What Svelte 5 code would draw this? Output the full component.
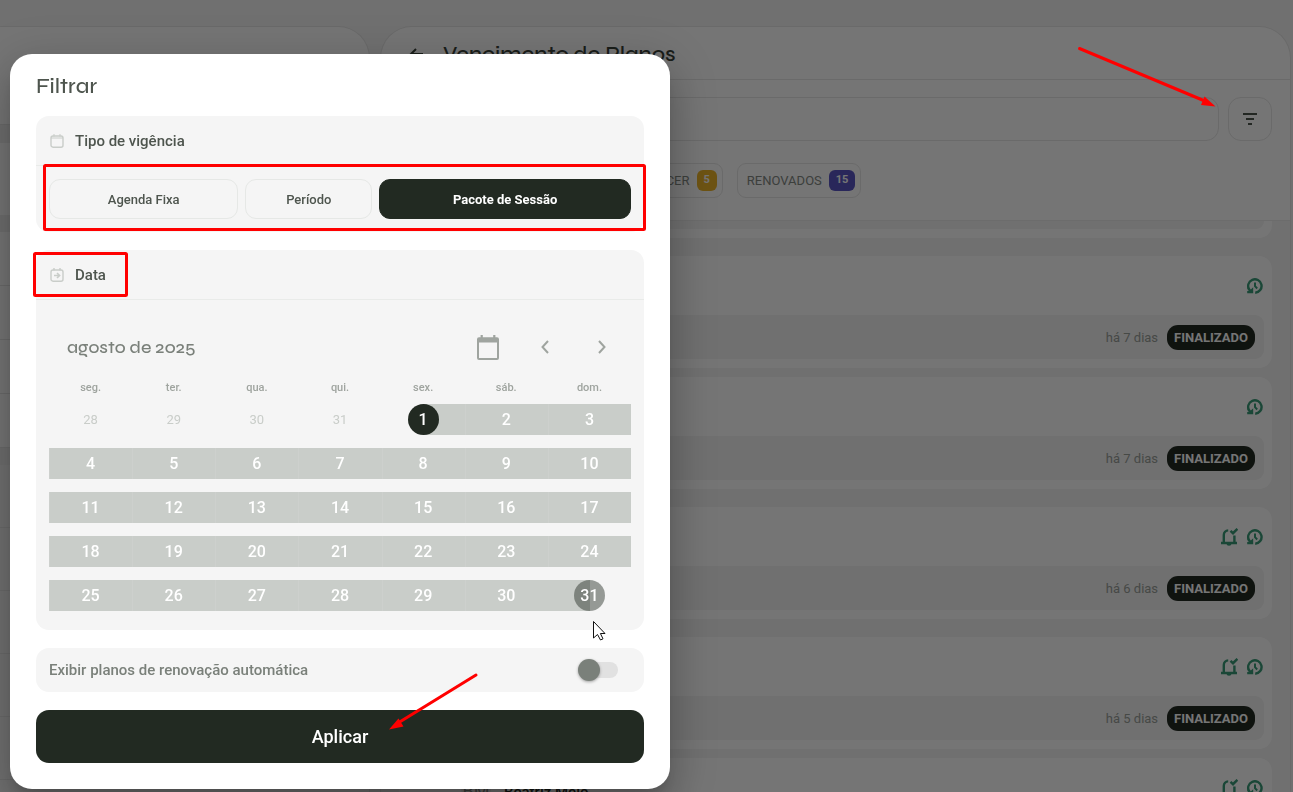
<script lang="ts">
  interface Plan {
    initials: string;
    name: string;
    ago: string;
    notified: boolean;
    firstOfGroup?: boolean;
  }

  const plans: Plan[] = [
    { initials: 'AC', name: 'Ana Costa', ago: 'há 7 dias', notified: false, firstOfGroup: true },
    { initials: 'CL', name: 'Carla Lima', ago: 'há 7 dias', notified: false },
    { initials: 'JS', name: 'Júlia Souza', ago: 'há 6 dias', notified: true, firstOfGroup: true },
    { initials: 'RA', name: 'Rita Alves', ago: 'há 5 dias', notified: true, firstOfGroup: true },
    { initials: 'BM', name: 'Beatriz Melo', ago: 'há 5 dias', notified: true }
  ];

  const types = [
    { id: 'fixed', label: 'Agenda Fixa' },
    { id: 'period', label: 'Período' },
    { id: 'package', label: 'Pacote de Sessão' }
  ];

  const weekdays = ['seg.', 'ter.', 'qua.', 'qui.', 'sex.', 'sáb.', 'dom.'];
  const days = [28, 29, 30, 31, ...Array.from({ length: 31 }, (_, i) => i + 1)];
  const weeks = Array.from({ length: 5 }, (_, w) =>
    days.slice(w * 7, w * 7 + 7).map((day, i) => ({ day, outside: w === 0 && i < 4 }))
  );

  let selectedType = $state('package');
  let start = $state(1);
  let end = $state(31);
  let autoRenew = $state(false);

  function pickDay(day: number) {
    if (day < start) start = day;
    else end = day;
  }
</script>

<div class="app">
  <aside class="side">
    <div class="side-head"></div>
    <div class="side-search"></div>
    {#each [1, 2, 3, 4] as row (row)}
      <div class="side-row"></div>
    {/each}
    <div class="side-gap"></div>
    {#each [1, 2, 3, 4, 5, 6] as row (row)}
      <div class="side-row tall"></div>
    {/each}
  </aside>

  <main class="panel">
    <header class="panel-head">
      <button type="button" class="back" aria-label="Voltar">
        <svg width="14" height="12" viewBox="0 0 14 12" fill="none" stroke="currentColor" stroke-width="2">
          <path d="M14 6H2M7 1 2 6l5 5" />
        </svg>
      </button>
      <h1>Vencimento de Planos</h1>
    </header>

    <div class="tools">
      <div class="search-row">
        <input type="search" class="search" aria-label="Buscar" />
        <button type="button" class="filter" aria-label="Filtrar">
          <svg width="14" height="12" viewBox="0 0 14 12" fill="currentColor">
            <path d="M0 0h14v2H0zM3 5h8v2H3zM5 10h4v2H5z" />
          </svg>
        </button>
      </div>
      <div class="chips">
        <button type="button" class="chip">PLANOS JÁ FINALIZADOS <span class="count dark">20</span></button>
        <button type="button" class="chip">A VENCER <span class="count yellow">5</span></button>
        <button type="button" class="chip">RENOVADOS <span class="count blue">15</span></button>
      </div>
    </div>

    <div class="list">
      <div class="card-end"><div></div></div>
      {#each plans as plan (plan.name)}
        <article class="card" class:first={plan.firstOfGroup}>
          <div class="card-top">
            <span class="avatar">{plan.initials}</span>
            <span class="name">{plan.name}</span>
            {#if plan.notified}
              <svg class="icon" width="17" height="18" viewBox="0 0 17 18" fill="none" stroke="currentColor" stroke-width="2.400">
                <path d="M2.800 15V7A4.500 4.500 0 0 1 7.200 2.400M13.400 7.400V15M0 15h16M9.500 2.800l2.500 2.400 4.400-4.400" />
                <path d="M5.500 15.500h5a2.500 2.300 0 0 1-5 0z" fill="currentColor" stroke="none" />
              </svg>
            {/if}
            <svg class="icon" width="16" height="16" viewBox="0 0 16 16" fill="none" stroke="currentColor" stroke-width="2.400">
              <path d="M8.200 14.700A6.700 6.700 0 1 0 2.200 11.600" />
              <path d="M8 4.500v3.700l2.200 2.300" stroke-width="2" />
              <path d="M.2 15.200V13l1.600-.2L.2 10.500l2-1 1.600 2 2.400-2.200v5.900z" fill="currentColor" stroke="none" />
            </svg>
          </div>
          <div class="card-foot">
            <span class="ago">{plan.ago}</span>
            <span class="status">FINALIZADO</span>
          </div>
        </article>
      {/each}
    </div>
  </main>
</div>

<div class="backdrop"></div>

<div class="modal" role="dialog" aria-modal="true" aria-labelledby="filter-title">
  <h2 id="filter-title">Filtrar</h2>

  <section class="block">
    <h3>
      <svg width="14" height="14" viewBox="0 0 14 14" fill="none" stroke="currentColor">
        <rect x="1" y="2" width="12" height="11.2" rx="2" stroke-width="1.4" />
        <path d="M4 0v2.6M10 0v2.6M1 4h12" stroke-width="1" />
      </svg>
      Tipo de vigência
    </h3>
    <div class="types">
      {#each types as type (type.id)}
        <button
          type="button"
          class="type {type.id}"
          class:active={selectedType === type.id}
          aria-pressed={selectedType === type.id}
          onclick={() => (selectedType = type.id)}
        >
          {type.label}
        </button>
      {/each}
    </div>
  </section>

  <section class="block">
    <h3>
      <svg width="14" height="14" viewBox="0 0 14 14" fill="none" stroke="currentColor">
        <rect x="1" y="2" width="12" height="11.2" rx="2" stroke-width="1.4" />
        <path d="M4 0v2.6M10 0v2.6" stroke-width="1.4" />
        <path d="M4 7.5h5M7 5l2.6 2.5L7 10" stroke-width="1.6" />
      </svg>
      Data
    </h3>
    <div class="calendar">
      <div class="cal-head">
        <span class="month">agosto de 2025</span>
        <button type="button" aria-label="Hoje">
          <svg width="22" height="25" viewBox="0 0 22 25" fill="currentColor">
            <path d="M3.6 0h2.2v2.2h10.4V0h2.2v2.2H20a2 2 0 0 1 2 2V23a2 2 0 0 1-2 2H2a2 2 0 0 1-2-2V4.200a2 2 0 0 1 2-2h1.600zM2 7.500V23h18V7.500z" fill-rule="evenodd" />
          </svg>
        </button>
        <button type="button" aria-label="Mês anterior">
          <svg width="8" height="14" viewBox="0 0 8 14" fill="none" stroke="currentColor" stroke-width="2">
            <path d="M7 1 1.500 7 7 13" />
          </svg>
        </button>
        <button type="button" aria-label="Próximo mês">
          <svg width="8" height="14" viewBox="0 0 8 14" fill="none" stroke="currentColor" stroke-width="2">
            <path d="M1 1l5.500 6L1 13" />
          </svg>
        </button>
      </div>
      <table>
        <thead>
          <tr>
            {#each weekdays as weekday (weekday)}
              <th scope="col">{weekday}</th>
            {/each}
          </tr>
        </thead>
        <tbody>
          {#each weeks as week, w (w)}
            <tr>
              {#each week as { day, outside } (day)}
                <td>
                  <button
                    type="button"
                    class="day"
                    class:outside
                    class:in-range={!outside && day > start && day < end}
                    class:start={!outside && day === start}
                    class:end={!outside && day === end}
                    disabled={outside}
                    onclick={() => pickDay(day)}
                  >
                    <span>{day}</span>
                  </button>
                </td>
              {/each}
            </tr>
          {/each}
        </tbody>
      </table>
    </div>
  </section>

  <label class="block renew">
    Exibir planos de renovação automática
    <input type="checkbox" role="switch" bind:checked={autoRenew} />
  </label>

  <button type="button" class="apply">Aplicar</button>

  <!-- Tutorial marks over the dialog -->
  <svg class="marks" width="660" height="734" viewBox="0 0 660 734" aria-hidden="true">
    <g fill="none" stroke="#f00" stroke-width="3">
      <rect x="34.500" y="111.500" width="600" height="64" rx="1" />
      <rect x="24.500" y="199.500" width="92" height="42" rx="1" />
      <path d="M466 621 388 669" stroke-linecap="round" />
    </g>
    <path d="M379 675.500 388.500 664.500 393.500 672.500z" fill="#f00" />
    <path
      d="M583.500 567.500v16.500l4-3.500 3 5.500 2.500-1.200-2.600-5.300h4.600z"
      fill="#fff"
      stroke="#111"
    />
  </svg>
</div>

<svg class="pointer" width="140" height="64" viewBox="0 0 140 64" aria-hidden="true">
  <path d="M3.500 3.500 130 56.500" fill="none" stroke="#f00" stroke-width="3" stroke-linecap="round" />
  <path d="M139.500 61.500 128.500 51.500 125 60z" fill="#f00" />
</svg>

<style>
  :global(body) {
    background: #f4f4f4;
    font-family: Roboto, sans-serif;
    color: #222a22;
  }

  button,
  input {
    font-family: inherit;
  }

  button {
    padding: 0;
    border: none;
    background: none;
    color: inherit;
    cursor: pointer;
  }

  h1,
  h2,
  h3 {
    margin: 0;
    font-weight: 500;
  }

  h1,
  h2,
  .month {
    font-family: Syne, Inter, sans-serif;
  }

  .app {
    box-sizing: border-box;
    display: flex;
    gap: 10px;
    height: 100vh;
    padding-top: 26px;
    padding-right: 2px;
    overflow: hidden;
  }

  /* Left panel, mostly covered by the dialog */
  .side {
    flex: 0 0 370px;
    box-sizing: border-box;
    border: 1px solid #e6e6e6;
    border-left: none;
    border-bottom: none;
    border-radius: 0 32px 0 0;
    background: #fff;
    overflow: hidden;
  }

  .side-head {
    height: 97px;
    border-bottom: 1px solid #e6e6e6;
  }

  .side-search {
    height: 72px;
    border-top: 18px solid #f0f0f0;
    border-bottom: 17px solid #f0f0f0;
  }

  .side-row {
    height: 53px;
    border-bottom: 1px solid #e6e6e6;
  }

  .side-row.tall {
    height: 62px;
    background: #f6f6f6;
  }

  .side-gap {
    height: 17px;
    background: #f0f0f0;
  }

  /* Right panel */
  .panel {
    flex: 1;
    min-width: 0;
    box-sizing: border-box;
    border: 1px solid #e6e6e6;
    border-bottom: none;
    border-radius: 32px 32px 0 0;
    background: #fff;
    overflow: hidden;
  }

  .panel-head {
    box-sizing: border-box;
    display: flex;
    align-items: center;
    gap: 20px;
    height: 53px;
    padding: 2px 0 0 28px;
    border-bottom: 1px solid #e6e6e6;
    color: #3a423a;
  }

  .back {
    display: flex;
  }

  h1 {
    font-size: 22px;
    line-height: 28px;
  }

  .tools {
    padding: 17px 18px 22px;
    border-bottom: 1px solid #ececec;
  }

  .search-row {
    display: flex;
    gap: 9px;
  }

  .search,
  .filter {
    box-sizing: border-box;
    height: 44px;
    border: 1px solid #e6e6e6;
    border-radius: 13px;
    background: #fff;
  }

  .search {
    flex: 1;
    min-width: 0;
  }

  .filter {
    display: flex;
    align-items: center;
    justify-content: center;
    width: 44px;
    color: #4e554e;
  }

  .chips {
    display: flex;
    gap: 14px;
    margin-top: 22px;
    padding-left: 4px;
  }

  .chip {
    box-sizing: border-box;
    display: flex;
    align-items: center;
    gap: 7px;
    height: 35px;
    padding: 0 5px 0 9px;
    border: 1px solid #e6e6e6;
    border-radius: 9px;
    color: #848984;
    font-size: 13px;
    white-space: nowrap;
  }

  .count {
    height: 21px;
    min-width: 6px;
    padding: 0 7px;
    border-radius: 6px;
    color: #fff;
    font-size: 11px;
    font-weight: 700;
    line-height: 20px;
  }

  .count.dark {
    background: #222a22;
  }

  .count.yellow {
    background: #eeb52b;
  }

  .count.blue {
    background: #5a55c4;
  }

  .list {
    height: 100%;
    padding: 0 18px;
    background: #f4f4f4;
  }

  .card-end {
    padding: 0 8px 9px;
    border-radius: 0 0 13px 13px;
    background: #fff;
  }

  .card-end div {
    height: 8px;
    border-radius: 0 0 9px 9px;
    background: #f4f4f4;
  }

  .card {
    margin-top: 9px;
    padding: 0 8px 9px;
    border-radius: 13px;
    background: #fff;
  }

  .card.first {
    margin-top: 18px;
  }

  .card-top {
    display: flex;
    align-items: center;
    gap: 9px;
    height: 59px;
    padding: 0 1px 0 54px;
  }

  .avatar {
    width: 30px;
    height: 30px;
    border-radius: 50%;
    background: #ececec;
    color: #848984;
    font-size: 18px;
    line-height: 36px;
    text-align: center;
  }

  .name {
    flex: 1;
    margin-left: 4px;
    padding-top: 9px;
    font-size: 15px;
    font-weight: 500;
    line-height: 20px;
  }

  .icon {
    color: #3a9b78;
  }

  .card-foot {
    display: flex;
    align-items: center;
    justify-content: flex-end;
    gap: 9px;
    height: 44px;
    padding-right: 9px;
    border-radius: 9px;
    background: #f4f4f4;
  }

  .ago {
    padding-top: 2px;
    color: #9a9f9a;
    font-size: 13px;
    line-height: 24px;
  }

  .status {
    padding: 1px 7px 0;
    border-radius: 11px;
    background: #222a22;
    color: #fff;
    font-size: 13px;
    font-weight: 700;
    line-height: 24px;
  }

  .backdrop {
    position: fixed;
    inset: 0;
    background: rgba(0, 0, 0, 0.54);
  }

  /* Dialog */
  .modal {
    position: absolute;
    top: 54px;
    left: 10px;
    box-sizing: border-box;
    width: min(660px, calc(100vw - 20px));
    padding: 18px 26px 26px;
    border-radius: 22px;
    background: #fff;
    box-shadow:
      0 11px 15px -7px rgba(0, 0, 0, 0.2),
      0 24px 38px 3px rgba(0, 0, 0, 0.14),
      0 9px 46px 8px rgba(0, 0, 0, 0.12);
  }

  h2 {
    color: #4e554e;
    font-size: 22px;
    line-height: 28px;
  }

  .block {
    display: block;
    margin-top: 18px;
    border-radius: 13px;
    background: #f5f5f5;
  }

  h2 + .block {
    margin-top: 16px;
  }

  h3 {
    display: flex;
    align-items: center;
    gap: 11px;
    height: 49px;
    padding-left: 14px;
    border-bottom: 1px solid #e9ebe9;
    color: #4e554e;
    font-size: 15px;
  }

  h3 svg {
    color: #c9cdc9;
  }

  .types {
    display: flex;
    gap: 7px;
    padding: 13px;
  }

  .type {
    box-sizing: border-box;
    height: 40px;
    border: 1px solid #e6e8e6;
    border-radius: 11px;
    color: #4e554e;
    font-size: 13px;
    font-weight: 500;
  }

  .type.fixed {
    flex: 3;
  }

  .type.period {
    flex: 2;
  }

  .type.package {
    flex: 4;
  }

  .type.active {
    border-color: #222a22;
    background: #222a22;
    color: #fff;
    font-weight: 700;
  }

  .calendar {
    padding: 23px 13px 6px;
  }

  .cal-head {
    display: flex;
    align-items: center;
    gap: 9px;
    padding: 0 5px 0 18px;
    color: #9fa49f;
  }

  .cal-head button {
    display: flex;
    align-items: center;
    justify-content: center;
    width: 48px;
    height: 48px;
  }

  .month {
    flex: 1;
    color: #7a807a;
    font-size: 18px;
    font-weight: 500;
  }

  table {
    width: 100%;
    border-collapse: collapse;
    table-layout: fixed;
  }

  th {
    height: 33px;
    padding: 0;
    color: #9fa49f;
    font-size: 11px;
    font-weight: 500;
    vertical-align: middle;
  }

  td {
    padding: 0 0 13px;
  }

  .day {
    display: flex;
    justify-content: center;
    width: 100%;
    height: 31px;
    color: #fff;
    font-size: 16px;
    font-weight: 500;
  }

  .day span {
    width: 31px;
    border-radius: 50%;
    line-height: 31px;
  }

  .day.outside {
    color: #c9cdc9;
    font-size: 13px;
    font-weight: 400;
  }

  .day.in-range {
    background: #c9cdc9;
    box-shadow: inset 1px 0 #cdd0cd;
  }

  .day.start {
    background: linear-gradient(to right, transparent 50%, #c9cdc9 50%);
  }

  .day.start span {
    background: #222a22;
  }

  .day.end {
    background: linear-gradient(to right, #c9cdc9 50%, transparent 50%);
  }

  .day.end span {
    background: rgba(34, 42, 34, 0.45);
  }

  .renew {
    display: flex;
    align-items: center;
    justify-content: space-between;
    height: 44px;
    padding: 0 26px 0 13px;
    color: #7a807a;
    font-size: 15px;
    font-weight: 500;
  }

  .renew input {
    appearance: none;
    position: relative;
    width: 36px;
    height: 16px;
    margin: 0;
    border-radius: 8px;
    background: #e1e1e1;
    cursor: pointer;
  }

  .renew input::before {
    content: '';
    position: absolute;
    top: -3px;
    left: -4px;
    width: 22px;
    height: 22px;
    border-radius: 50%;
    background: #7a807a;
    box-shadow: 0 1px 3px rgba(0, 0, 0, 0.35);
  }

  .renew input:checked::before {
    left: 18px;
    background: #222a22;
  }

  .apply {
    width: 100%;
    height: 53px;
    margin-top: 18px;
    border-radius: 13px;
    background: #222a22;
    color: #fff;
    font-size: 18px;
    font-weight: 500;
  }

  .marks {
    position: absolute;
    top: 0;
    left: 0;
    pointer-events: none;
  }

  .pointer {
    position: absolute;
    top: 45px;
    right: 77px;
    pointer-events: none;
  }
</style>
